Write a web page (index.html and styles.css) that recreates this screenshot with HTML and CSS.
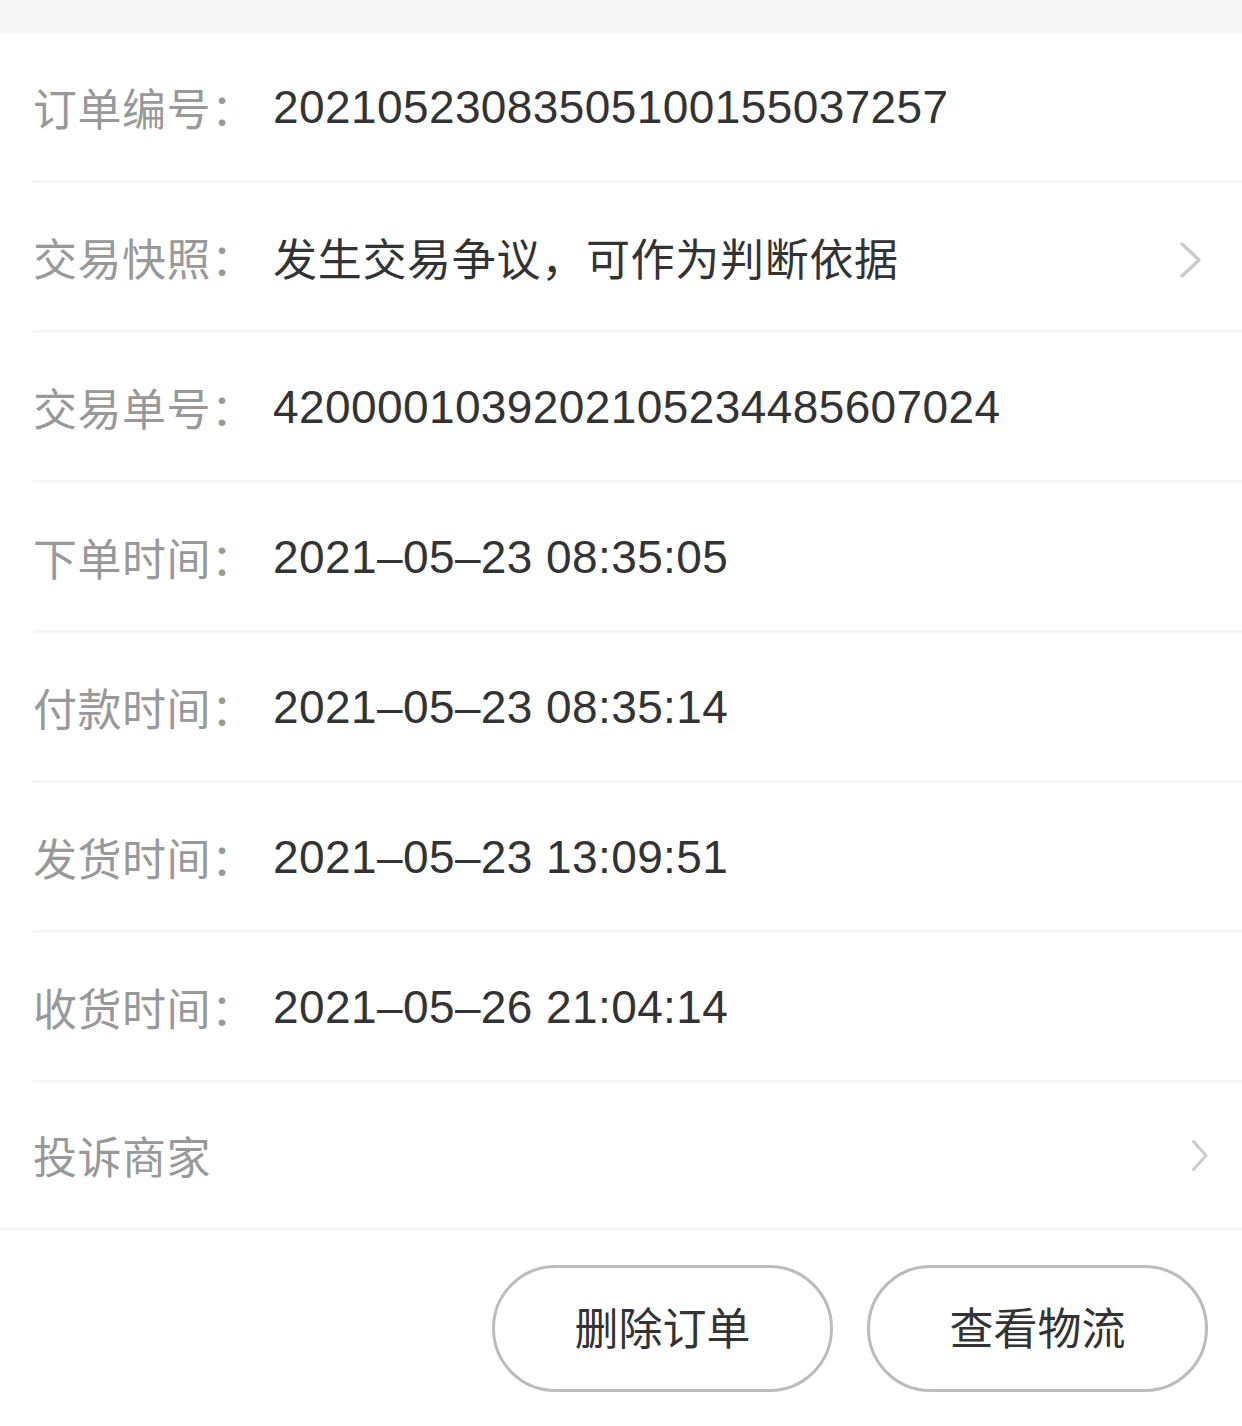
FILE: index.html
```html
<!DOCTYPE html>
<html lang="zh-CN">
<head>
<meta charset="utf-8">
<link rel="stylesheet" href="styles.css">
</head>
<body>
<div class="topbar"></div>
<div class="list">
  <div class="row"><span class="label">订单编号：</span><span class="value">20210523083505100155037257</span></div>
  <div class="row"><span class="label">交易快照：</span><span class="value value-cn">发生交易争议，可作为判断依据</span>
    <svg class="chev chev-a" viewBox="0 0 24 38"><path d="M3 3 L20 19 L3 35"/></svg></div>
  <div class="row"><span class="label">交易单号：</span><span class="value">4200001039202105234485607024</span></div>
  <div class="row"><span class="label">下单时间：</span><span class="value">2021–05–23 08:35:05</span></div>
  <div class="row"><span class="label">付款时间：</span><span class="value">2021–05–23 08:35:14</span></div>
  <div class="row"><span class="label">发货时间：</span><span class="value">2021–05–23 13:09:51</span></div>
  <div class="row"><span class="label">收货时间：</span><span class="value">2021–05–26 21:04:14</span></div>
  <div class="row row-last"><span class="label">投诉商家</span>
    <svg class="chev chev-b" viewBox="0 0 18 33"><path d="M2.5 2.5 L15 16.5 L2.5 30.5"/></svg></div>
</div>
<div class="actions">
  <button class="btn">删除订单</button>
  <button class="btn">查看物流</button>
</div>
</body>
</html>
```
FILE: styles.css
```css
html, body {
  margin: 0;
  padding: 0;
  background: #fff;
}
body {
  width: 1242px;
  height: 1426px;
  overflow: hidden;
  font-family: "Liberation Sans", "Noto Sans CJK SC", sans-serif;
}
.topbar {
  height: 33px;
  background: #f7f7f7;
}
.list {
  border-bottom: 4px solid #f7f7f7;
}
.row {
  margin-left: 33px;
  height: 147px;
  border-bottom: 3px solid #f5f5f5;
  display: flex;
  align-items: center;
  padding-left: 0;
}
.row-last {
  height: 144px;
  border-bottom: none;
}
.label {
  width: 240px;
  flex: none;
  font-size: 44px;
  color: #999;
  letter-spacing: 0.5px;
  font-family: "Noto Sans CJK SC", sans-serif;
}
.value {
  font-size: 46px;
  color: #333;
  letter-spacing: 0.4px;
  font-family: "Liberation Sans", "Noto Sans CJK SC", sans-serif;
}
.value-cn {
  font-size: 44px;
  letter-spacing: 0.7px;
  font-family: "Noto Sans CJK SC", sans-serif;
}
.chev {
  margin-left: auto;
  fill: none;
  stroke: #cbcbcb;
  stroke-linecap: round;
  stroke-linejoin: round;
}
.chev-a {
  width: 24px;
  height: 38px;
  stroke-width: 3.5;
  margin-right: 39px;
  margin-top: 6px;
}
.chev-b {
  width: 18px;
  height: 33px;
  stroke-width: 3;
  margin-right: 33px;
}
.actions {
  display: flex;
  justify-content: flex-end;
  gap: 34px;
  padding: 34px 34px 0 0;
}
.btn {
  width: 341px;
  height: 127px;
  border: 3px solid #bcbcbc;
  border-radius: 64px;
  background: #fff;
  font-family: "Noto Sans CJK SC", sans-serif;
  font-size: 44px;
  color: #333;
  padding: 0 0 6px 0;
}
```
